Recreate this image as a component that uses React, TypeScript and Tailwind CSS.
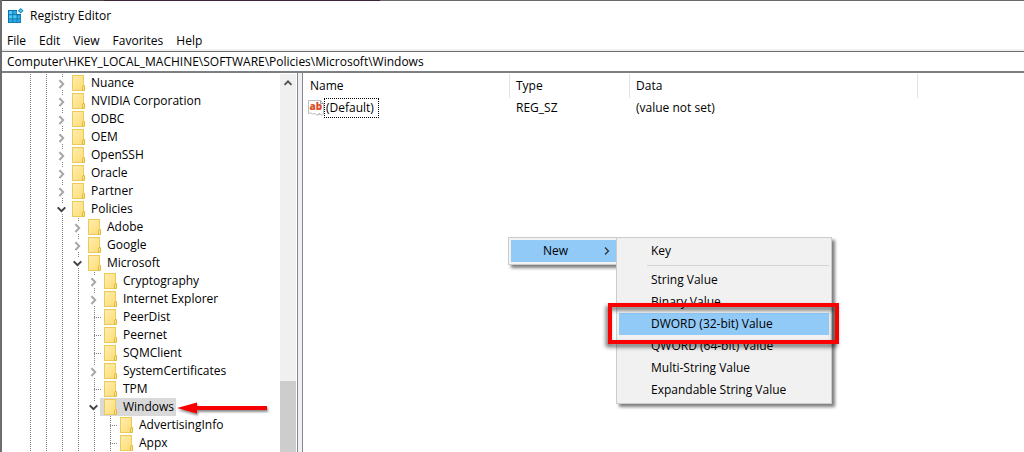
import React from "react";

type Expander = "closed" | "open" | "none";

interface Node {
  name: string;
  depth: number;
  state: Expander;
  selected?: boolean;
}

const nodes: Node[] = [
  { name: "Nuance", depth: 2, state: "closed" },
  { name: "NVIDIA Corporation", depth: 2, state: "closed" },
  { name: "ODBC", depth: 2, state: "closed" },
  { name: "OEM", depth: 2, state: "closed" },
  { name: "OpenSSH", depth: 2, state: "closed" },
  { name: "Oracle", depth: 2, state: "closed" },
  { name: "Partner", depth: 2, state: "closed" },
  { name: "Policies", depth: 2, state: "open" },
  { name: "Adobe", depth: 3, state: "closed" },
  { name: "Google", depth: 3, state: "closed" },
  { name: "Microsoft", depth: 3, state: "open" },
  { name: "Cryptography", depth: 4, state: "closed" },
  { name: "Internet Explorer", depth: 4, state: "closed" },
  { name: "PeerDist", depth: 4, state: "none" },
  { name: "Peernet", depth: 4, state: "none" },
  { name: "SQMClient", depth: 4, state: "none" },
  { name: "SystemCertificates", depth: 4, state: "closed" },
  { name: "TPM", depth: 4, state: "none" },
  { name: "Windows", depth: 4, state: "open", selected: true },
  { name: "AdvertisingInfo", depth: 5, state: "none" },
  { name: "Appx", depth: 5, state: "none" },
];

const newValues = [
  "String Value",
  "Binary Value",
  "DWORD (32-bit) Value",
  "QWORD (64-bit) Value",
  "Multi-String Value",
  "Expandable String Value",
];

function AppIcon() {
  return (
    <svg width="16" height="16" viewBox="0 0 16 16" aria-hidden="true">
      <path d="M0 2h9v4h4v9H0z" fill="#0a72b0" />
      <g fill="#4fc8f4">
        <path d="M1 3h3.4v3.2H1zM1 7.2h3.4v3.2H1z" />
        <path d="M5.2 7.2h3.4v3.2H5.2z" />
      </g>
      <g fill="#2fa9e0">
        <path d="M5.2 3h3.4v3.2H5.2zM1 11.2h3.4v3H1zM5.2 11.2h3.4v3H5.2z" />
        <path d="M9.4 7.2h3v3.2h-3zM9.4 11.2h3v3h-3z" />
      </g>
      <path d="M12.7 0l2.8 2.8-2.8 2.8-2.8-2.8z" fill="#1583bd" />
      <path d="M12.7 1.3l1.5 1.5-1.5 1.5-1.5-1.5z" fill="#5fd0f6" />
    </svg>
  );
}

function Folder() {
  return (
    <svg className="shrink-0" width="13" height="16" viewBox="0 0 13 16" aria-hidden="true">
      <defs>
        <linearGradient id="folder" x1="0" y1="0" x2="1" y2="1">
          <stop offset="0" stopColor="#ffeeb0" />
          <stop offset="1" stopColor="#fcdc74" />
        </linearGradient>
      </defs>
      <rect x="0.5" y="0.5" width="11" height="15" fill="url(#folder)" stroke="#edc958" />
      <path d="M10.5 15.5v-4.2l1-.8h1v5z" fill="#fde28a" stroke="#e3b93c" />
    </svg>
  );
}

function Chevron({ state }: { state: Expander }) {
  if (state === "open") {
    return (
      <svg width="16" height="18" viewBox="0 0 16 18" aria-hidden="true">
        <path d="M3 4h11v10H3z" fill="#fff" />
        <path d="M3.7 7.4L7.5 11.1l3.8-3.7" fill="none" stroke="#404040" strokeWidth="2" />
      </svg>
    );
  }
  return (
    <svg width="16" height="18" viewBox="0 0 16 18" aria-hidden="true">
      <path d="M4 3h8v13H4z" fill="#fff" />
      <path d="M5.4 6.2l3.8 3.9-3.8 3.9" fill="none" stroke="#a6a6a6" strokeWidth="2" />
    </svg>
  );
}

function Guide() {
  return (
    <span className="h-full w-4 shrink-0 pl-2">
      <span className="block h-full w-px bg-[repeating-linear-gradient(to_bottom,#808080_0_1px,transparent_1px_2px)]" />
    </span>
  );
}

function Arrow() {
  return (
    <svg
      className="absolute top-0 left-full overflow-visible drop-shadow-[1px_2px_1px_rgba(0,0,0,0.45)]"
      width="92"
      height="18"
      viewBox="0 0 92 18"
      aria-hidden="true"
    >
      <path d="M1 10L21 4.5V8h70v4H21v3.5z" fill="#f80000" />
    </svg>
  );
}

function TreeRow({ node }: { node: Node }) {
  return (
    <li
      role="treeitem"
      aria-level={node.depth + 1}
      aria-selected={!!node.selected}
      aria-expanded={node.state === "none" ? undefined : node.state === "open"}
      className="flex h-[18px] items-center"
    >
      {Array.from({ length: node.depth }, (_, i) => (
        <Guide key={i} />
      ))}
      <span className="grid h-full w-[14px] shrink-0">
        <span className="col-start-1 row-start-1 flex h-full">
          <Guide />
        </span>
        {node.state === "none" ? (
          <span className="col-start-1 row-start-1 ml-2 h-px w-2 self-center bg-[repeating-linear-gradient(to_right,#808080_0_1px,transparent_1px_2px)]" />
        ) : (
          <span className="z-10 col-start-1 row-start-1 w-4">
            <Chevron state={node.state} />
          </span>
        )}
      </span>
      <span
        className={
          node.selected
            ? "relative z-10 flex h-full items-center gap-[6px] bg-[#d9d9d9] pr-[2px] pl-1 whitespace-nowrap"
            : "relative z-10 flex h-full items-center gap-[6px] px-1 whitespace-nowrap"
        }
      >
        <Folder />
        {node.name}
        {node.selected && <Arrow />}
      </span>
    </li>
  );
}

function ValueIcon() {
  return (
    <svg width="16" height="16" viewBox="0 0 16 16" aria-hidden="true">
      <path
        d="M0.5 0.5h12l3 3v10.5l-1.500 1.500-2.500-2-2 1.500-3-1.500-2 .5-1.500-1-2.500.5z"
        fill="#fff"
        stroke="#bdbdbd"
      />
      <path d="M12.500 0.500v3h3M12 13.500l-2 1.500" fill="none" stroke="#9c9c9c" />
      <text x="1.500" y="10" fontFamily="Open Sans, sans-serif" fontSize="10" fontWeight="800" fill="#d9512c">
        ab
      </text>
    </svg>
  );
}

function MenuItem({ label, children, active }: { label: string; children?: React.ReactNode; active?: boolean }) {
  return (
    <button
      type="button"
      role="menuitem"
      className={
        active
          ? "relative z-10 flex h-[22px] w-full items-center bg-[#91c9f7] pl-8 text-left whitespace-nowrap"
          : "flex h-[22px] w-full items-center pl-8 text-left whitespace-nowrap"
      }
    >
      {label}
      {children}
    </button>
  );
}

function ContextMenu() {
  return (
    <div
      role="menu"
      className="absolute top-[164px] left-[205px] w-[109px] border border-[#cccccc] bg-[#f2f2f2] py-[2px] pl-[2px] shadow-[3px_3px_3px_rgba(0,0,0,0.5)]"
    >
      <MenuItem label="New" active>
        <svg className="mr-[6px] ml-auto" width="6" height="10" viewBox="0 0 6 10" aria-hidden="true">
          <path d="M1 1.500l3.500 3.500L1 8.500" fill="none" stroke="#303030" strokeWidth="1.200" />
        </svg>
      </MenuItem>
      <div
        role="menu"
        aria-label="New"
        className="absolute -top-px left-[107px] z-20 w-[216px] border border-[#cccccc] bg-[#f1f1f1] p-[2px] shadow-[3px_3px_3px_rgba(0,0,0,0.5)]"
      >
        <MenuItem label="Key" />
        <div role="separator" className="flex h-[7px] items-center pl-7">
          <span className="h-px w-full bg-[#d4d4d4]" />
        </div>
        {newValues.map((label) => {
          const active = label.startsWith("DWORD");
          return (
            <MenuItem key={label} label={label} active={active}>
              {active && (
                <span className="absolute -top-[10px] -right-[10px] -bottom-[9px] -left-[11px] border-4 border-[#fa0000] drop-shadow-[-2px_3px_2px_rgba(0,0,0,0.6)]" />
              )}
            </MenuItem>
          );
        })}
      </div>
    </div>
  );
}

export default function App() {
  return (
    <div className="flex min-h-screen flex-col overflow-hidden border-l-2 border-[#6d6d70] bg-white font-['Open_Sans','Noto_Sans',sans-serif] text-[12px] leading-4 text-black">
      <div className="h-px bg-[linear-gradient(to_right,#4a4648_0_10%,#3a2336_10%_37%,#6a6a6a_37%)]" />
      <header className="flex h-[30px] items-center gap-[6px] pl-[6px]">
        <AppIcon />
        <h1>Registry Editor</h1>
      </header>
      <nav className="flex h-[20px] items-center gap-[13px] border-b-2 border-[#f0f0f0] pt-[2px] pl-[5px]">
        {["File", "Edit", "View", "Favorites", "Help"].map((m) => (
          <button key={m} type="button">
            {m}
          </button>
        ))}
      </nav>
      <input
        type="text"
        aria-label="Address"
        defaultValue="Computer\HKEY_LOCAL_MACHINE\SOFTWARE\Policies\Microsoft\Windows"
        className="h-[22px] w-full border-t border-b-2 border-t-[#6e7072] border-b-[#7b8084] pl-[5px] outline-none"
      />
      <main className="flex grow">
        <div className="flex w-[296px] shrink-0 border-r border-[#828790] pt-px pr-px">
          <ul role="tree" aria-label="Registry keys" className="w-[278px] pl-5">
            {nodes.map((n) => (
              <TreeRow key={n.name} node={n} />
            ))}
          </ul>
          <div className="flex w-4 flex-col bg-[#f0f0f0]">
            <button type="button" aria-label="Scroll up" className="flex h-[18px] items-center justify-center">
              <svg width="10" height="8" viewBox="0 0 10 8" aria-hidden="true">
                <path d="M1.500 5.800L5 2.300l3.500 3.500" fill="none" stroke="#505050" strokeWidth="1.800" />
              </svg>
            </button>
            <div className="mt-[289px] grow bg-[#cdcdcd]" />
          </div>
        </div>
        <div className="w-1 shrink-0 bg-[#f0f0f0]" />
        <section className="relative min-w-0 grow border-l border-[#828790] pt-px">
          <table className="w-full table-fixed border-separate border-spacing-0 text-left">
            <colgroup>
              <col className="w-[207px]" />
              <col className="w-[120px]" />
              <col className="w-[288px]" />
              <col />
            </colgroup>
            <thead>
              <tr className="h-6">
                <th className="border-r border-[#e2e2e2] p-0 pl-[7px] font-normal">Name</th>
                <th className="border-r border-[#e2e2e2] p-0 pl-[6px] font-normal">Type</th>
                <th className="border-r border-[#e2e2e2] p-0 pl-[6px] font-normal">Data</th>
                <td />
              </tr>
            </thead>
            <tbody>
              <tr className="h-5">
                <td className="p-0 pl-[5px]">
                  <div className="flex items-center">
                    <ValueIcon />
                    <span className="border border-dotted border-black py-px pr-1 pl-px">(Default)</span>
                  </div>
                </td>
                <td className="p-0 pl-[6px]">REG_SZ</td>
                <td className="p-0 pl-[6px]">(value not set)</td>
                <td />
              </tr>
            </tbody>
          </table>
          <ContextMenu />
        </section>
      </main>
    </div>
  );
}
